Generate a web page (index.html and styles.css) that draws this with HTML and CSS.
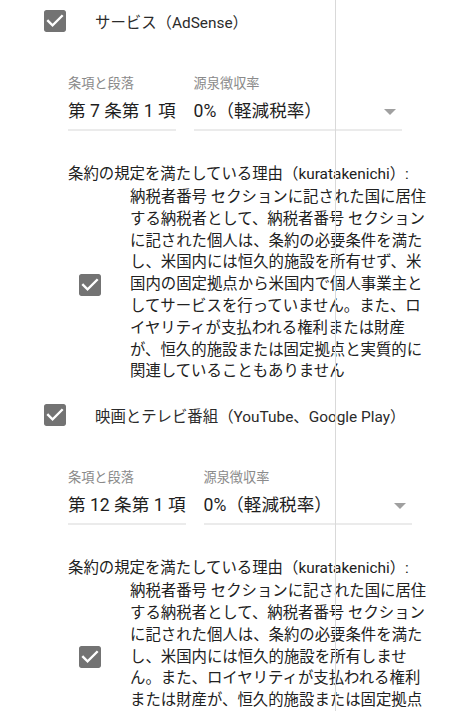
FILE: index.html
```html
<!DOCTYPE html>
<html>
	<head>
		<title>租税条約</title>
		<meta charset="utf-8" />
		<link rel="stylesheet" href="styles.css">
	</head>
	<body>
		<div id="treaty">
			<div class="item">
				<div class="head">
					<svg class="check" viewBox="3 3 18 18"><path d="M19 3H5c-1.11 0-2 .9-2 2v14c0 1.1.89 2 2 2h14c1.11 0 2-.9 2-2V5c0-1.1-.89-2-2-2zm-9 14l-5-5 1.41-1.41L10 14.170l7.59-7.59L19 8l-9 9z"/></svg>
					<span class="head-text">サービス（AdSense）</span>
				</div>
				<div class="fields">
					<div class="field">
						<div class="label">条項と段落</div>
						<div class="value">第 7 条第 1 項</div>
					</div>
					<div class="field select">
						<div class="label">源泉徴収率</div>
						<div class="value">0%（軽減税率）</div>
						<span class="arrow"></span>
					</div>
				</div>
				<div class="reason">
					<div class="reason-label">条約の規定を満たしている理由（kuratakenichi）:</div>
					<div class="reason-body">
						<div class="reason-check">
							<svg class="check" viewBox="3 3 18 18"><path d="M19 3H5c-1.11 0-2 .9-2 2v14c0 1.1.89 2 2 2h14c1.11 0 2-.9 2-2V5c0-1.1-.89-2-2-2zm-9 14l-5-5 1.41-1.41L10 14.17l7.59-7.59L19 8l-9 9z"/></svg>
						</div>
						<div class="reason-text">納税者番号 セクションに記された国に居住する納税者として、納税者番号 セクションに記された個人は、条約の必要条件を満たし、米国内には恒久的施設を所有せず、米国内の固定拠点から米国内で個人事業主としてサービスを行っていません。また、ロイヤリティが支払われる権利または財産が、恒久的施設または固定拠点と実質的に関連していることもありません</div>
					</div>
				</div>
			</div>

			<div class="item">
				<div class="head">
					<svg class="check" viewBox="3 3 18 18"><path d="M19 3H5c-1.11 0-2 .9-2 2v14c0 1.1.89 2 2 2h14c1.11 0 2-.9 2-2V5c0-1.1-.89-2-2-2zm-9 14l-5-5 1.41-1.41L10 14.17l7.59-7.59L19 8l-9 9z"/></svg>
					<span class="head-text">映画とテレビ番組（YouTube、Google Play）</span>
				</div>
				<div class="fields">
					<div class="field">
						<div class="label">条項と段落</div>
						<div class="value">第 12 条第 1 項</div>
					</div>
					<div class="field select">
						<div class="label">源泉徴収率</div>
						<div class="value">0%（軽減税率）</div>
						<span class="arrow"></span>
					</div>
				</div>
				<div class="reason">
					<div class="reason-label">条約の規定を満たしている理由（kuratakenichi）:</div>
					<div class="reason-body">
						<div class="reason-check">
							<svg class="check" viewBox="3 3 18 18"><path d="M19 3H5c-1.11 0-2 .9-2 2v14c0 1.1.89 2 2 2h14c1.11 0 2-.9 2-2V5c0-1.1-.89-2-2-2zm-9 14l-5-5 1.41-1.41L10 14.17l7.59-7.59L19 8l-9 9z"/></svg>
						</div>
						<div class="reason-text">納税者番号 セクションに記された国に居住する納税者として、納税者番号 セクションに記された個人は、条約の必要条件を満たし、米国内には恒久的施設を所有しません。また、ロイヤリティが支払われる権利または財産が、恒久的施設または固定拠点と実質的に関連していることもありません</div>
					</div>
				</div>
			</div>
		</div>
		<div id="guide"></div>
	</body>
</html>
```

FILE: styles.css
```css
*{ box-sizing: border-box; }
body{
	margin: 0; background: white; color: #212121;
	font-family: Roboto, "Noto Sans CJK JP", sans-serif;
}
#treaty{ width: 453px; }
#guide{
	position: fixed; top: 0; bottom: 0; left: 335px;
	width: 1px; background: #d9d9d9;
}

.item{ padding-bottom: 11px; }
.head{
	display: flex; align-items: center;
	height: 42px; padding-left: 44px;
}
.head-text{ margin-left: 29px; font-size: 15.4px; color: #2b2b2b; }
.check{ width: 22px; height: 22px; fill: #737373; display: block; }

.fields{
	display: flex; gap: 18px;
	margin-top: 33px; padding-left: 68px;
}
.field{ border-bottom: 2px solid #ebebeb; padding-bottom: 6px; position: relative; }
.field.select{ width: 208px; }
.label{ font-size: 13.2px; line-height: 18px; color: #8a8a8a; }
.value{ font-size: 17.6px; line-height: 24px; margin-top: 6px; color: #1e1e1e; }
.arrow{
	position: absolute; right: 6px; top: 34px;
	border-left: 6px solid transparent; border-right: 6px solid transparent;
	border-top: 6px solid #a0a0a0;
}

.reason{ margin-top: 32px; padding-left: 68px; padding-right: 22px; font-size: 15.4px; }
.reason-label{ line-height: 22px; }
.reason-body{ display: flex; align-items: center; margin-top: 2px; }
.reason-check{ width: 62px; flex: none; padding-left: 11px; }
.reason-text{ line-height: 21.8px; }
```
